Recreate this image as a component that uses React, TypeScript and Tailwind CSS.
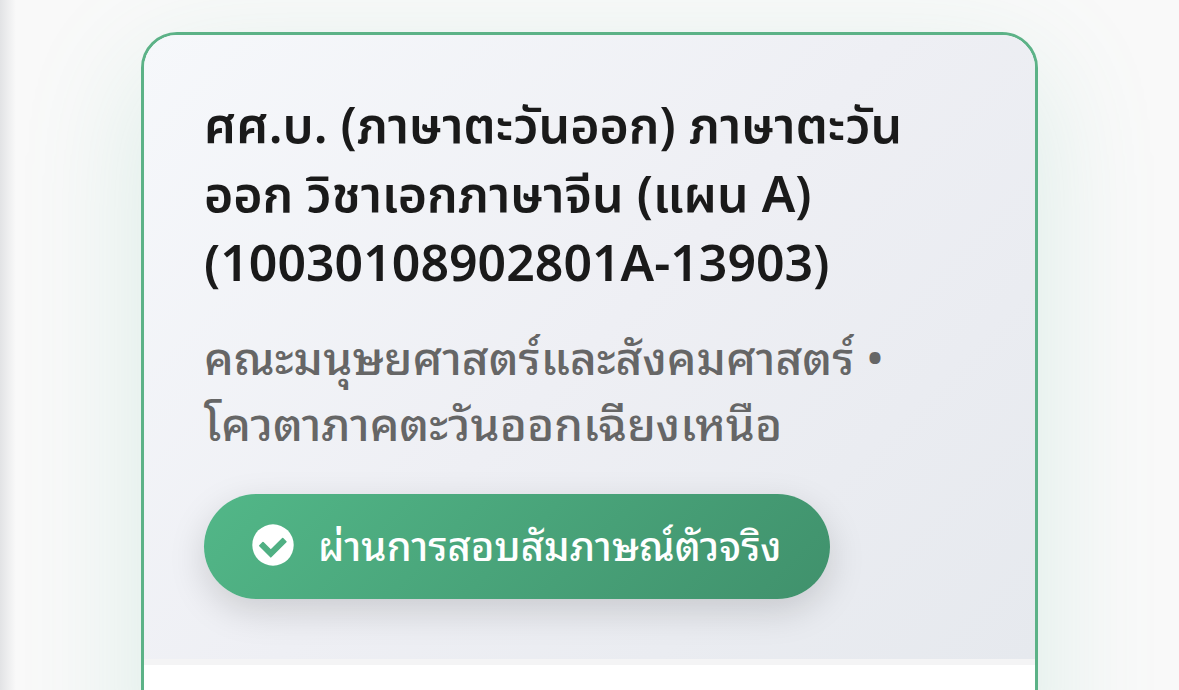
const program = {
  faculty: "คณะมนุษยศาสตร์และสังคมศาสตร์",
  quota: "โควตาภาคตะวันออกเฉียงเหนือ",
  status: "ผ่านการสอบสัมภาษณ์ตัวจริง",
};

function CheckCircle() {
  return (
    <svg viewBox="0 0 42 42" className="size-[42px] shrink-0" aria-hidden="true">
      <circle cx="21" cy="21" r="20.7" fill="#fff" />
      <path
        d="M7.8 21.8 11 18.6 18.8 26.3 30.7 14.5 33.9 17.7 18.8 32.8Z"
        fill="#50b083"
        stroke="#50b083"
        strokeWidth="1.6"
        strokeLinejoin="round"
      />
    </svg>
  );
}

export default function App() {
  return (
    <main className="flex h-screen overflow-hidden bg-[#f9f9f9] font-['Noto_Sans','Noto_Sans_Thai',sans-serif]">
      <div className="w-4 shrink-0 bg-linear-to-r from-[#e2e3e5] to-[#f9f9f9]" />
      <div className="flex-1 pt-8 pr-[141px] pl-[125px]">
        <article className="h-[760px] overflow-hidden rounded-[36px] border-3 border-[#5cb287] bg-white shadow-[0_36px_120px_rgba(82,183,150,0.18)]">
          <header className="border-b-6 border-[#f4f4f5] bg-linear-135 from-[#f6f8fb] via-[#eeeff4] to-[#e6e9ee] px-[60px] pt-[55px] pb-[60px]">
            <h1 className="text-[50px] leading-[69px] font-semibold text-[#1a1a1a]">
              ศศ.บ. (ภาษาตะวันออก) ภาษาตะวัน
              <wbr />
              ออก วิชาเอกภาษาจีน (แผน A) (10030108902801A-13903)
            </h1>
            <p className="mt-6 font-['Noto_Sans_Thai_Looped','Loma','Noto_Sans',sans-serif] text-[46px] leading-[66px] font-medium text-[#666]">
              {`${program.faculty} • ${program.quota}`}
            </p>
            <div className="mt-[41px] inline-flex h-[105px] items-center gap-6 rounded-full bg-linear-135 from-[#52b788] to-[#40916c] px-12 pb-1 font-['Noto_Sans_Thai_Looped','Loma','Noto_Sans',sans-serif] text-[40px] font-medium text-white shadow-[0_12px_36px_rgba(0,0,0,0.15)]">
              <CheckCircle />
              <span className="pb-1">{program.status}</span>
            </div>
          </header>
        </article>
      </div>
    </main>
  );
}
